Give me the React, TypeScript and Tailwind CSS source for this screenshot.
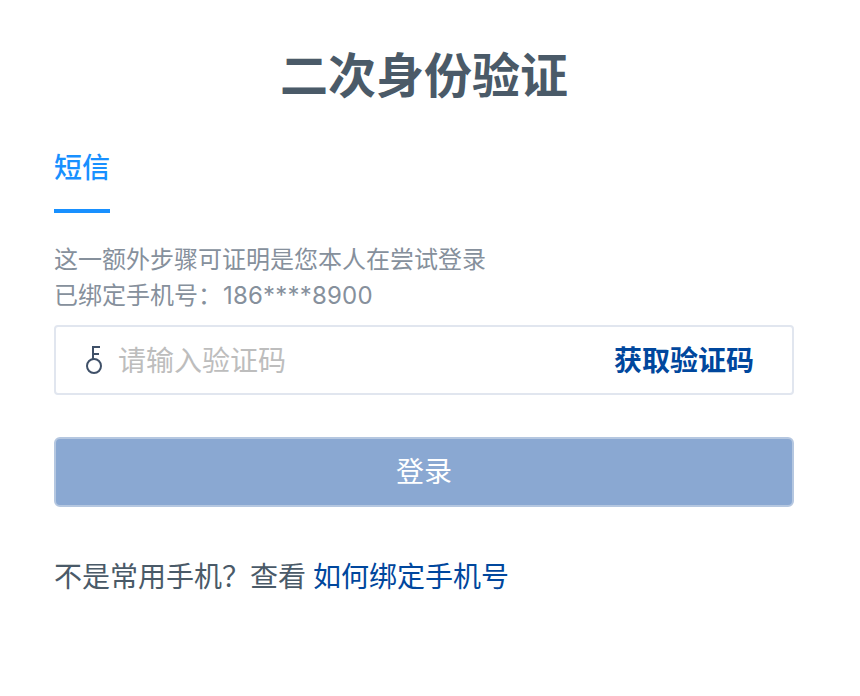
export default function App() {
  return (
    <div className="min-h-screen bg-white pl-[54px] pr-[66px] font-['Inter','Noto_Sans_CJK_SC',sans-serif]">
      <h1 className="pt-[44px] text-center text-[48px] font-bold leading-[64px] text-[#4a5a68]">二次身份验证</h1>
      <div className="mt-[41px] w-[56px] border-b-[4px] border-[#1890ff] pb-[22px] text-[28px] font-medium leading-[38px] text-[#1890ff]">短信</div>
      <p className="mt-[29px] text-[24px] leading-[36px] text-[#86909c]">
        这一额外步骤可证明是您本人在尝试登录
        <br />
        已绑定手机号：<span className="ml-[1px] tracking-[0.2px]">186****8900</span>
      </p>
      <div className="mt-[11px] flex h-[70px] items-center rounded border-2 border-[#e1e6ef] pl-[28px] pr-[38px]">
        <svg className="-mt-[1px]" width="20" height="30" viewBox="0 0 20 30" fill="none" stroke="#3f5068" strokeWidth="2">
          <circle cx="10" cy="21" r="7" />
          <path d="M9 14V2h7M9 9h6" />
        </svg>
        <span className="ml-[14px] flex-1 pt-[1px] text-[28px] text-[#bdbdbd]">请输入验证码</span>
        <button className="pt-[1px] text-[28px] font-bold text-[#00479d]">获取验证码</button>
      </div>
      <button className="mt-[42px] block h-[70px] w-full rounded-md border-2 border-[#b5c7e0] bg-[#8aa8d2] text-[28px] text-white">登录</button>
      <p className="mt-[51px] text-[28px] leading-[38px] text-[#4a5a68]">
        不是常用手机？查看 <a className="-ml-[1px] text-[#00479d]">如何绑定手机号</a>
      </p>
    </div>
  )
}
